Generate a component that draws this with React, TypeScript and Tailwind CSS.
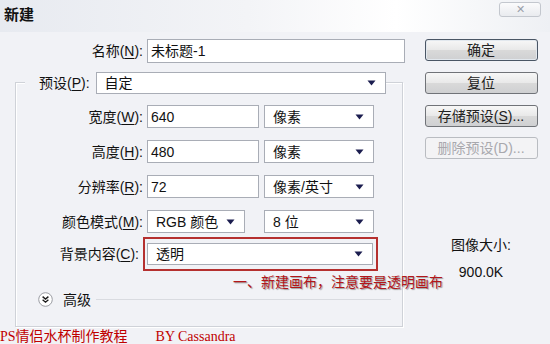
import React from "react";

const cjk = "font-['Liberation_Sans','Noto_Sans_CJK_SC',sans-serif]";

const Arrow = () => (
  <svg width="9" height="6" viewBox="0 0 9 6" className="shrink-0">
    <polygon points="0.5,0.5 8.5,0.5 4.5,5.5" fill="#1b1d4f" />
  </svg>
);

const Select = ({ value, className = "" }: { value: string; className?: string }) => (
  <div
    className={`flex h-[22px] items-center justify-between border border-[#a9adb6] bg-white pl-[8px] pr-[9px] text-[14px] leading-none text-[#111] ${className}`}
  >
    <span>{value}</span>
    <Arrow />
  </div>
);

const Field = ({ value, className = "" }: { value: string; className?: string }) => (
  <div
    className={`flex h-[23px] items-center border border-[#a9adb6] bg-white pl-[3px] text-[14px] leading-none text-[#111] ${className}`}
  >
    {value}
  </div>
);

const Label = ({ text, k, rest }: { text: string; k: string; rest?: string }) => (
  <span className="whitespace-nowrap text-[14px] leading-none text-[#111]">
    {text}(<span className="underline underline-offset-2">{k}</span>){rest ?? ":"}
  </span>
);

const Button = ({ text, primary, disabled }: { text: React.ReactNode; primary?: boolean; disabled?: boolean }) => (
  <div
    className={`flex h-[22px] w-[113px] items-center justify-center rounded-[3px] border text-[14px] leading-none ${
      disabled
        ? "border-[#b9bcc1] bg-[#f3f3f5] text-[#a8a8ad]"
        : primary
        ? "border-[#4a5665] bg-[linear-gradient(#f7f7f7,#e9e9e9_48%,#d9d9d9_52%,#cfd0d2)] text-[#222] shadow-[inset_0_0_0_1px_#e2e8ee]"
        : "border-[#707378] bg-[linear-gradient(#f7f7f7,#e9e9e9_48%,#d9d9d9_52%,#cfd0d2)] text-[#222]"
    }`}
  >
    {text}
  </div>
);

export default function App() {
  return (
    <div className={`flex h-[344px] w-[550px] flex-col overflow-hidden bg-[#f1f2f6] ${cjk}`}>
      {/* title bar */}
      <div className="flex h-[32px] shrink-0 items-start justify-between bg-[linear-gradient(90deg,#e7eaf0,#f3f4f7_45%,#ffffff_72%,#eef0f4)]">
        <span className="pl-[4px] pt-[7px] text-[15px] font-bold leading-none text-[#111]">新建</span>
        <div className="mr-[9px] mt-[2px] flex h-[15px] w-[42px] items-center justify-center rounded-[3px] border border-[#c3c7ce] bg-[linear-gradient(#fbfbfc,#e9ebef)] text-[11px] leading-none text-[#9aa0aa]">
          ✕
        </div>
      </div>

      <div className="flex pl-[15px] pt-[7px]">
        {/* left */}
        <div className="flex w-[390px] flex-col">
          <div className="flex h-[24px] items-center">
            <div className="w-[128px] text-right">
              <Label text="名称" k="N" />
            </div>
            <Field value="未标题-1" className="ml-[4px] h-[24px] w-[258px]" />
          </div>

          <div className="mt-[19px] flex h-[245px] w-[388px] flex-col border border-[#cfd2d8] shadow-[inset_1px_1px_0_#fff,1px_1px_0_#fff]">
            <div className="-mt-[11px] ml-[9px] mr-[16px] flex items-center gap-[6px] bg-[#f1f2f6] pl-[14px]">
              <Label text="预设" k="P" />
              <Select value="自定" className="flex-1" />
            </div>

            {[
              ["宽度", "W", "640", "像素"],
              ["高度", "H", "480", "像素"],
              ["分辨率", "R", "72", "像素/英寸"],
            ].map(([t, k, v, u], i) => (
              <div key={t} className={`flex h-[23px] items-center ${i === 0 ? "mt-[11px]" : "mt-[12px]"}`}>
                <div className="w-[127px] text-right">
                  <Label text={t} k={k} />
                </div>
                <Field value={v} className="ml-[4px] w-[112px]" />
                <Select value={u} className="ml-[5px] h-[23px] w-[110px]" />
              </div>
            ))}

            <div className="mt-[12px] flex h-[23px] items-center">
              <div className="w-[127px] text-right">
                <Label text="颜色模式" k="M" />
              </div>
              <Select value="RGB 颜色" className="ml-[4px] h-[23px] w-[98px]" />
              <Select value="8 位" className="ml-[19px] h-[23px] w-[110px]" />
            </div>

            <div className="mt-[4px] flex h-[34px] items-center">
              <div className="w-[127px] pr-[4px] text-right">
                <Label text="背景内容" k="C" />
              </div>
              <div className="flex h-[34px] w-[235px] items-center border-2 border-[#b5302f] pl-[2px] pr-[3px]">
                <Select value="透明" className="flex-1" />
              </div>
            </div>

            <div className="relative z-10 ml-[217px] mt-[3px] whitespace-nowrap text-[14px] leading-[17px] text-[#b3161a] [text-shadow:1px_1px_1px_#9a9a9a]">
              一、新建画布，注意要是透明画布
            </div>

            <div className="ml-[22px] mt-[1px] flex h-[15px] items-center">
              <svg width="15" height="15" viewBox="0 0 15 15">
                <circle cx="7.5" cy="7.5" r="6.8" fill="#fff" stroke="#9a9ca2" />
                <path d="M4.6 4.6 L7.5 7 L10.4 4.6 M4.6 7.8 L7.5 10.2 L10.4 7.8" fill="none" stroke="#1c1c1c" strokeWidth="1.4" />
              </svg>
              <span className="ml-[10px] text-[14px] leading-none text-[#111]">高级</span>
              <div className="ml-[5px] h-px w-[295px] bg-[#d9dbe0]" />
            </div>
          </div>
        </div>

        {/* right */}
        <div className="ml-[19px] flex w-[114px] flex-col items-center">
          <div className="flex flex-col gap-[11px]">
            <Button text="确定" primary />
            <Button text="复位" />
            <Button text={<>存储预设(<span className="underline underline-offset-2">S</span>)...</>} />
            <div className="-mt-[1px]">
              <Button text="删除预设(D)..." disabled />
            </div>
          </div>
          <div className="mt-[78px] text-[14px] leading-[16px] text-[#111]">图像大小:</div>
          <div className="mt-[11px] text-[14px] leading-[16px] text-[#111]">900.0K</div>
        </div>
      </div>

      <div className="mt-[3px] flex h-[15px] items-center whitespace-nowrap text-[14px] leading-none text-[#c00000]">
        <span className="font-['Liberation_Serif','Noto_Sans_CJK_SC',serif]">PS情侣水杯制作教程</span>
        <span className="ml-[28px] font-['Liberation_Serif',serif]">BY Cassandra</span>
      </div>
      <div className="mt-auto h-[2px] bg-[#bfeae2]" />
    </div>
  );
}
